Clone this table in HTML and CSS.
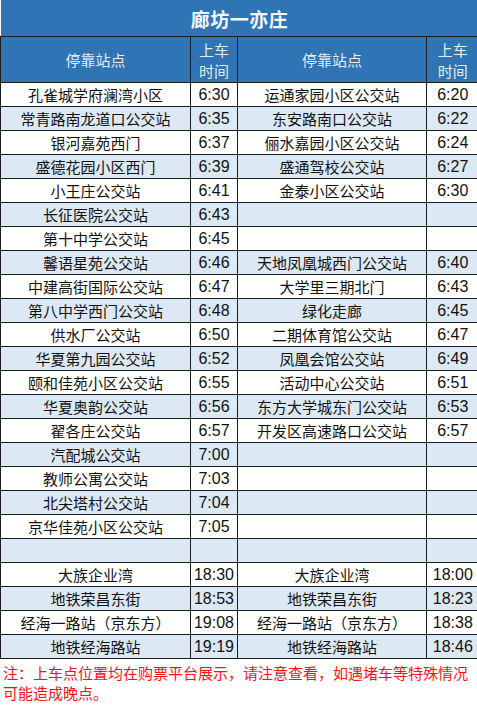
FILE: index.html
```html
<!DOCTYPE html>
<html lang="zh-CN">
<head>
<meta charset="utf-8">
<title>廊坊一亦庄</title>
<link rel="stylesheet" href="styles.css">
</head>
<body>
<table class="sched">
  <colgroup>
    <col class="c-st1"><col class="c-t1"><col class="c-st2"><col class="c-t2">
  </colgroup>
  <thead>
    <tr class="title-row"><th colspan="4">廊坊一亦庄</th></tr>
    <tr class="head-row">
      <th>停靠站点</th><th class="tt">上车<br>时间</th>
      <th>停靠站点</th><th class="tt last">上车<br>时间</th>
    </tr>
  </thead>
  <tbody>
    <tr><td>孔雀城学府澜湾小区</td><td class="t">6:30</td><td>运通家园小区公交站</td><td class="t last">6:20</td></tr>
    <tr class="alt"><td>常青路南龙道口公交站</td><td class="t">6:35</td><td>东安路南口公交站</td><td class="t last">6:22</td></tr>
    <tr><td>银河嘉苑西门</td><td class="t">6:37</td><td>俪水嘉园小区公交站</td><td class="t last">6:24</td></tr>
    <tr class="alt"><td>盛德花园小区西门</td><td class="t">6:39</td><td>盛通驾校公交站</td><td class="t last">6:27</td></tr>
    <tr><td>小王庄公交站</td><td class="t">6:41</td><td>金泰小区公交站</td><td class="t last">6:30</td></tr>
    <tr class="alt"><td>长征医院公交站</td><td class="t">6:43</td><td></td><td class="t last"></td></tr>
    <tr><td>第十中学公交站</td><td class="t">6:45</td><td></td><td class="t last"></td></tr>
    <tr class="alt"><td>馨语星苑公交站</td><td class="t">6:46</td><td>天地凤凰城西门公交站</td><td class="t last">6:40</td></tr>
    <tr><td>中建高街国际公交站</td><td class="t">6:47</td><td>大学里三期北门</td><td class="t last">6:43</td></tr>
    <tr class="alt"><td>第八中学西门公交站</td><td class="t">6:48</td><td>绿化走廊</td><td class="t last">6:45</td></tr>
    <tr><td>供水厂公交站</td><td class="t">6:50</td><td>二期体育馆公交站</td><td class="t last">6:47</td></tr>
    <tr class="alt"><td>华夏第九园公交站</td><td class="t">6:52</td><td>凤凰会馆公交站</td><td class="t last">6:49</td></tr>
    <tr><td>颐和佳苑小区公交站</td><td class="t">6:55</td><td>活动中心公交站</td><td class="t last">6:51</td></tr>
    <tr class="alt"><td>华夏奥韵公交站</td><td class="t">6:56</td><td>东方大学城东门公交站</td><td class="t last">6:53</td></tr>
    <tr><td>翟各庄公交站</td><td class="t">6:57</td><td>开发区高速路口公交站</td><td class="t last">6:57</td></tr>
    <tr class="alt"><td>汽配城公交站</td><td class="t">7:00</td><td></td><td class="t last"></td></tr>
    <tr><td>教师公寓公交站</td><td class="t">7:03</td><td></td><td class="t last"></td></tr>
    <tr class="alt"><td>北尖塔村公交站</td><td class="t">7:04</td><td></td><td class="t last"></td></tr>
    <tr><td>京华佳苑小区公交站</td><td class="t">7:05</td><td></td><td class="t last"></td></tr>
    <tr class="alt"><td></td><td class="t"></td><td></td><td class="t last"></td></tr>
    <tr><td>大族企业湾</td><td class="t">18:30</td><td>大族企业湾</td><td class="t last">18:00</td></tr>
    <tr class="alt"><td>地铁荣昌东街</td><td class="t">18:53</td><td>地铁荣昌东街</td><td class="t last">18:23</td></tr>
    <tr><td>经海一路站（京东方）</td><td class="t">19:08</td><td>经海一路站（京东方）</td><td class="t last">18:38</td></tr>
    <tr class="alt"><td>地铁经海路站</td><td class="t">19:19</td><td>地铁经海路站</td><td class="t last">18:46</td></tr>
  </tbody>
</table>
<p class="note">注：上车点位置均在购票平台展示，请注意查看，如遇堵车等特殊情况可能造成晚点。</p>
</body>
</html>
```

FILE: styles.css
```css
html, body {
  margin: 0;
  padding: 0;
  background: #ffffff;
}
body {
  font-family: "Noto Sans CJK SC", "Noto Sans", sans-serif;
  color: #111111;
  overflow: hidden;
}
.sched {
  border-collapse: collapse;
  table-layout: fixed;
  width: 478px;
}
.c-st1 { width: 190px; }
.c-t1 { width: 47px; }
.c-st2 { width: 189px; }
.c-t2 { width: 52px; }

.sched th,
.sched td {
  padding: 0;
  text-align: center;
  vertical-align: middle;
  border: 1px solid #1c1c1c;
  white-space: nowrap;
  overflow: hidden;
}
.title-row th {
  height: 35px;
  background: #2f74b5;
  color: #f2f6fb;
  font-size: 19px;
  font-weight: bold;
  letter-spacing: 0.5px;
  border-top: none;
  border-left: none;
  border-right: none;
  line-height: 22px;
  padding-top: 1px;
}
.head-row th {
  height: 45px;
  background: #2f74b5;
  color: #e4ecf6;
  font-size: 15px;
  font-weight: normal;
  line-height: 21px;
}
.sched tbody tr {
  height: 24px;
}
.sched tbody td {
  font-size: 15px;
  line-height: 22px;
  background: #ffffff;
}
.sched tbody tr.alt td {
  background: #dce8f4;
}
.sched td.t {
  font-family: "Liberation Sans", Arial, sans-serif;
  font-size: 16px;
}
.sched tr > :first-child {
  border-left-width: 1px;
}
.sched .last {
  border-right: none;
}
.note {
  margin: 4px 0 0 0;
  padding: 0 6px 0 3px;
  width: 468px;
  color: #ff1010;
  font-size: 15px;
  line-height: 20px;
}
```
